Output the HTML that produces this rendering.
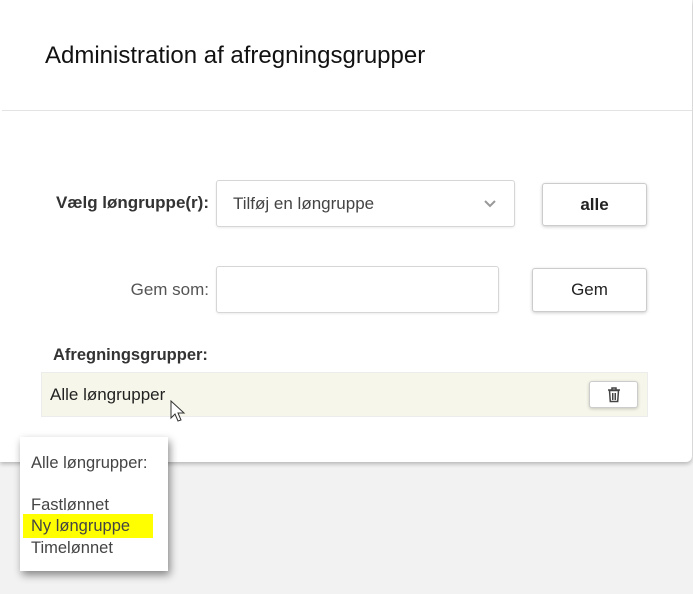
<!DOCTYPE html>
<html><head><style>
*{box-sizing:border-box;margin:0;padding:0}
body{width:693px;height:594px;background:#f2f2f2;font-family:"Liberation Sans",sans-serif;position:relative;overflow:hidden;color:#222}
.card{position:absolute;left:0;top:0;width:692px;height:462px;background:#fff;border-radius:0 0 6px 0;box-shadow:0 2px 4px rgba(0,0,0,.25)}
.abs{position:absolute}
.title{left:45px;top:42px;font-size:24px;color:#111}
.hr{left:2px;top:110px;width:690px;height:1px;background:#e3e3e3}
.box{border:1px solid #d6d6d6;border-radius:3px;background:#fff;box-shadow:0 1px 2px rgba(0,0,0,.08)}
.btn{border:1px solid #ccc;border-radius:3px;background:#fff;box-shadow:0 1px 3px rgba(0,0,0,.2);text-align:center;font-size:17px}
.lbl{right:483px;text-align:right;white-space:nowrap}
</style></head><body>
<div class="card">
<div class="abs title">Administration af afregningsgrupper</div>
<div class="abs hr"></div>
<div class="abs lbl" style="top:193px;font-size:17px;font-weight:bold;color:#333">Vælg løngruppe(r):</div>
<div class="abs box" style="left:216px;top:180px;width:299px;height:47px"><span class="abs" style="left:16px;top:13px;font-size:17px;color:#444">Tilføj en løngruppe</span>
<svg class="abs" style="left:266px;top:18px" width="14" height="10"><path d="M2 2 L7 7 L12 2" stroke="#999" stroke-width="2" fill="none"/></svg></div>
<div class="abs btn" style="left:542px;top:183px;width:105px;height:43px;line-height:41px;font-weight:bold">alle</div>
<div class="abs lbl" style="top:280px;font-size:17px;color:#555">Gem som:</div>
<div class="abs box" style="left:216px;top:266px;width:283px;height:47px"></div>
<div class="abs btn" style="left:532px;top:268px;width:115px;height:44px;line-height:42px">Gem</div>
<div class="abs" style="left:53px;top:346px;font-size:16.5px;font-weight:bold;color:#333">Afregningsgrupper:</div>
<div class="abs" style="left:41px;top:372px;width:607px;height:45px;background:#f6f6ea;border:1px solid #ececec"><span class="abs" style="left:8px;top:12px;font-size:17px;color:#222">Alle løngrupper</span>
<div class="abs btn" style="left:547px;top:8px;width:49px;height:27px">
<svg class="abs" style="left:17px;top:5px" width="14" height="16"><path d="M1 3h12M5 3V1h4v2M2.5 3.5h9l-.8 11h-7.4z" stroke="#444" stroke-width="1.5" fill="none"/><path d="M5.5 6v7M7 6v7M8.5 6v7" stroke="#444" stroke-width="1"/></svg></div></div>
<svg class="abs" style="left:170px;top:400px" width="16" height="24"><path d="M1 1 L1 18 L5 14 L8 21 L11 20 L8 13 L14 13 Z" fill="#fff" stroke="#333" stroke-width="1"/></svg>
</div>
<div class="abs" style="left:20px;top:437px;width:148px;height:134px;background:#fff;box-shadow:2px 4px 8px rgba(0,0,0,.45);font-size:16.5px;color:#444">
<div class="abs" style="left:11px;top:17px">Alle løngrupper:</div>
<div class="abs" style="left:11px;top:59px">Fastlønnet</div>
<div class="abs" style="left:3px;top:77px;width:130px;height:24px;background:#ffff00"></div>
<div class="abs" style="left:11px;top:80px">Ny løngruppe</div>
<div class="abs" style="left:11px;top:102px">Timelønnet</div>
</div>
</body></html>
